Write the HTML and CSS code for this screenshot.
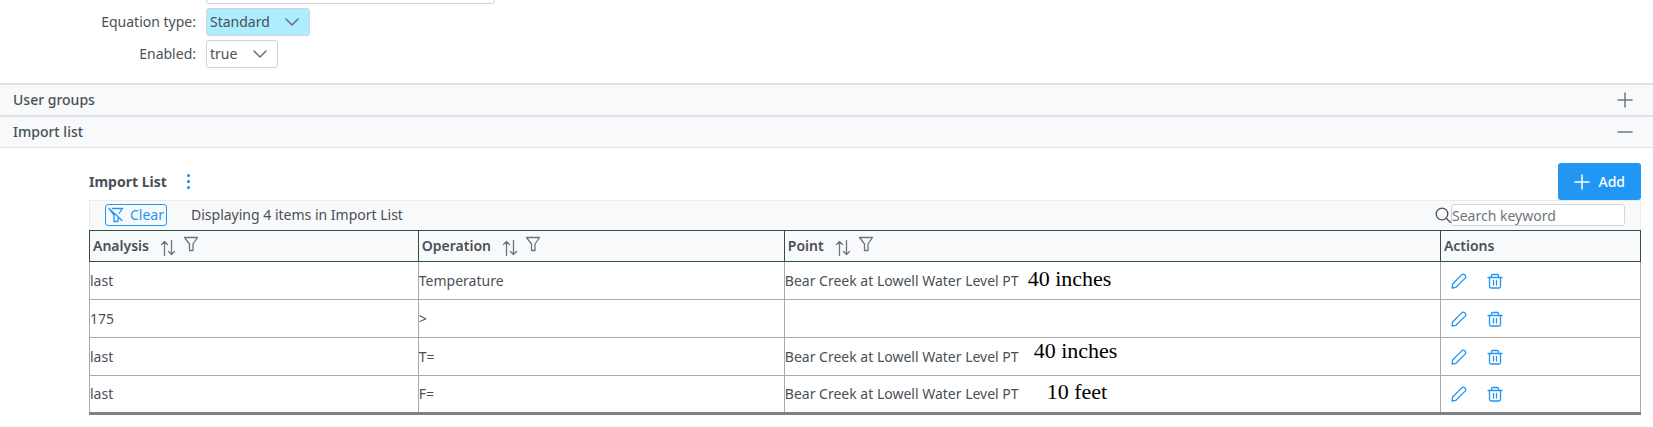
FILE: index.html
```html
<!DOCTYPE html>
<html lang="en">
<head>
<meta charset="utf-8">
<title>Import list</title>
<link rel="stylesheet" href="styles.css">
</head>
<body>
<svg class="sprite" aria-hidden="true">
  <symbol id="chevron" viewBox="0 0 16 16"><path d="M2 5l6 6 6-6"/></symbol>
  <symbol id="plus" viewBox="0 0 16 16"><path d="M8 1v14M1 8h14"/></symbol>
  <symbol id="minus" viewBox="0 0 16 16"><path d="M1 8h14"/></symbol>
  <symbol id="sort" viewBox="0 0 16 16"><path d="M4.500 15.500V2M1.500 4.500l3-3 3 3M11.500 .5V14M8.500 11.500l3 3 3-3"/></symbol>
  <symbol id="filter" viewBox="0 0 16 16"><path d="M1.500 1.500h13L10 8v6.500H6.500V8z"/></symbol>
  <symbol id="filter-off" viewBox="0 0 16 16"><path d="M4.500 1.500h10L11 6.500M1 1.500l13 12M1.500 2l4.500 6v6.500h4V9.500"/></symbol>
  <symbol id="search" viewBox="0 0 16 16"><circle cx="7" cy="7" r="5.800"/><path d="M11.200 11.200l4.300 4.300"/></symbol>
  <symbol id="pencil" viewBox="0 0 16 16"><path d="M1 15l.6-4L11.200 1.400q1.200-.8 2.500.4t.9 2.800L5 14.300z"/></symbol>
  <symbol id="trash" viewBox="0 0 16 16"><path d="M1 4.500h14M4.500 4.500v-2q0-1 1-1h5q1 0 1 1v2M2.500 4.500v9q0 1.500 1.500 1.500h8q1.500 0 1.500-1.500v-9M6.500 7.500v4.500M9.500 7.500v4.500"/></symbol>
</svg>

<form class="form">
  <label for="name"></label>
  <input id="name" class="field" type="text">
  <label for="eq">Equation type:</label>
  <span class="picker"><select id="eq" class="field filled"><option>Standard</option></select><svg class="icon"><use href="#chevron"/></svg></span>
  <label for="enabled">Enabled:</label>
  <span class="picker"><select id="enabled" class="field"><option>true</option></select><svg class="icon"><use href="#chevron"/></svg></span>
</form>

<button class="section" type="button" aria-expanded="false">User groups<svg class="icon"><use href="#plus"/></svg></button>
<button class="section open" type="button" aria-expanded="true">Import list<svg class="icon"><use href="#minus"/></svg></button>

<main class="panel">
  <header class="titlebar">
    <h2 class="title">Import List</h2>
    <button class="more" type="button" aria-label="More options"><i></i><i></i><i></i></button>
    <button class="add" type="button"><svg class="icon"><use href="#plus"/></svg>Add</button>
  </header>
  <div class="toolbar">
    <button class="clear" type="button"><svg class="icon"><use href="#filter-off"/></svg>Clear</button>
    <span>Displaying 4 items in Import List</span>
    <label class="search"><svg class="icon"><use href="#search"/></svg><input type="text" placeholder="Search keyword" aria-label="Search keyword"></label>
  </div>
  <table class="grid">
    <colgroup><col class="c-analysis"><col class="c-operation"><col class="c-point"><col></colgroup>
    <thead>
      <tr>
        <th><div class="head">Analysis<svg class="icon sort"><use href="#sort"/></svg><svg class="icon"><use href="#filter"/></svg></div></th>
        <th><div class="head">Operation<svg class="icon sort"><use href="#sort"/></svg><svg class="icon"><use href="#filter"/></svg></div></th>
        <th><div class="head">Point<svg class="icon sort"><use href="#sort"/></svg><svg class="icon"><use href="#filter"/></svg></div></th>
        <th><div class="head">Actions</div></th>
      </tr>
    </thead>
    <tbody>
      <tr>
        <td>last</td><td>Temperature</td>
        <td><div class="point">Bear Creek at Lowell Water Level PT<span class="note note-a">40 inches</span></div></td>
        <td><div class="actions"><button type="button" aria-label="Edit"><svg class="icon"><use href="#pencil"/></svg></button><button type="button" aria-label="Delete"><svg class="icon"><use href="#trash"/></svg></button></div></td>
      </tr>
      <tr>
        <td>175</td><td>&gt;</td><td></td>
        <td><div class="actions"><button type="button" aria-label="Edit"><svg class="icon"><use href="#pencil"/></svg></button><button type="button" aria-label="Delete"><svg class="icon"><use href="#trash"/></svg></button></div></td>
      </tr>
      <tr>
        <td>last</td><td>T=</td>
        <td><div class="point">Bear Creek at Lowell Water Level PT<span class="note note-b">40 inches</span></div></td>
        <td><div class="actions"><button type="button" aria-label="Edit"><svg class="icon"><use href="#pencil"/></svg></button><button type="button" aria-label="Delete"><svg class="icon"><use href="#trash"/></svg></button></div></td>
      </tr>
      <tr>
        <td>last</td><td>F=</td>
        <td><div class="point">Bear Creek at Lowell Water Level PT<span class="note note-c">10 feet</span></div></td>
        <td><div class="actions"><button type="button" aria-label="Edit"><svg class="icon"><use href="#pencil"/></svg></button><button type="button" aria-label="Delete"><svg class="icon"><use href="#trash"/></svg></button></div></td>
      </tr>
    </tbody>
  </table>
</main>
</body>
</html>
```

FILE: styles.css
```css
* { box-sizing: border-box; }

body {
  margin: 0;
  overflow: hidden;
  background: #fff;
  color: #495057;
  font: 14px/20px "Noto Sans", "Open Sans", sans-serif;
}

button, input, select { font: inherit; color: inherit; }
button { border: 0; padding: 0; background: none; cursor: pointer; }

.sprite { position: absolute; width: 0; height: 0; }

.icon {
  flex: none;
  width: 16px;
  height: 16px;
  fill: none;
  stroke: currentColor;
  stroke-width: 1.3;
  stroke-linecap: round;
  stroke-linejoin: round;
}

/* Properties form, scrolled so that only the foot of its first field shows */
.form {
  display: grid;
  grid-template-columns: 196px 289px;
  column-gap: 10px;
  row-gap: 4px;
  margin-top: -24px;
  padding-bottom: 15px;
  align-items: center;
}
.form label { text-align: right; }

.field {
  height: 28px;
  border: 1px solid #ced4da;
  border-radius: 3px;
  background: #fff;
  padding: 0 3px;
}
.picker { position: relative; justify-self: start; height: 28px; }
.picker .field { appearance: none; padding-right: 39px; }
.picker .filled { background: #adedff; }
.picker .icon {
  position: absolute;
  right: 10px;
  top: 6px;
  color: #6c757d;
  stroke-width: 1.6;
  pointer-events: none;
}

.section {
  display: flex;
  align-items: center;
  justify-content: space-between;
  width: 100%;
  height: 32px;
  padding: 0 20px 0 13px;
  border-top: 2px solid #dee2e6;
  background: #f8f9fa;
  font-weight: 500;
  text-align: left;
}
.section.open { height: 33px; border-bottom: 1px solid #dee2e6; }
.section .icon { color: #6c757d; stroke-width: 1.5; }

.panel { padding: 15px 12px 0 89px; }

.titlebar { display: flex; align-items: center; }
.title { margin: 0; font-size: 14px; font-weight: 700; }
.more {
  display: flex;
  flex-direction: column;
  align-items: center;
  gap: 3px;
  width: 16px;
  margin-left: 14px;
}
.more i { width: 3px; height: 3px; border-radius: 2px; background: #1c84dc; }
.add {
  display: flex;
  align-items: center;
  gap: 8px;
  height: 37px;
  margin-left: auto;
  padding: 0 16px;
  border-radius: 3px;
  background: #2196f3;
  color: #fff;
  font-weight: 500;
}
.add .icon { stroke-width: 1.5; }

.toolbar {
  display: flex;
  align-items: center;
  height: 30px;
  padding: 0 15px 1px;
  border: 1px solid #e9ecef;
  border-bottom: 0;
  background: #f8f9fa;
}
.clear {
  display: flex;
  align-items: center;
  gap: 6px;
  height: 22px;
  margin-right: 24px;
  padding: 0 2px;
  border: 1px solid #2196f3;
  border-radius: 3px;
  color: #2196f3;
}
.search { display: flex; align-items: center; margin-left: auto; }
.search input {
  width: 174px;
  height: 22px;
  padding: 0;
  border: 1px solid #ced4da;
  border-radius: 3px;
  background: #fff;
}
.search input::placeholder { color: #6c757d; opacity: 1; }

.grid { width: 100%; border-collapse: collapse; table-layout: fixed; border-bottom: 3px solid #808080; }
.c-analysis { width: 21.2%; }
.c-operation { width: 23.6%; }
.c-point { width: 42.3%; }
.grid th, .grid td { height: 38px; padding: 0; border: 1px solid #a9a9a9; text-align: left; }
.grid th {
  height: 31px;
  padding: 0 3px;
  border-color: #2f4f4f;
  background: #f8f9fa;
  font-weight: 600;
}
.head { display: flex; align-items: center; gap: 7px; }
.head .icon { color: #6c757d; margin-bottom: 4px; }
.head .sort { margin: 3px 0 0 4px; }

.point { position: relative; width: max-content; }
.note {
  position: absolute;
  left: 100%;
  bottom: 1px;
  color: #000;
  font: 22px/22px "Liberation Serif", serif;
  white-space: nowrap;
}
.note-a { margin-left: 9px; }
.note-b { margin-left: 15px; bottom: 5px; }
.note-c { margin-left: 28px; }

.actions { display: flex; gap: 20px; padding-left: 10px; color: #2196f3; }
.actions button { display: flex; }
```
